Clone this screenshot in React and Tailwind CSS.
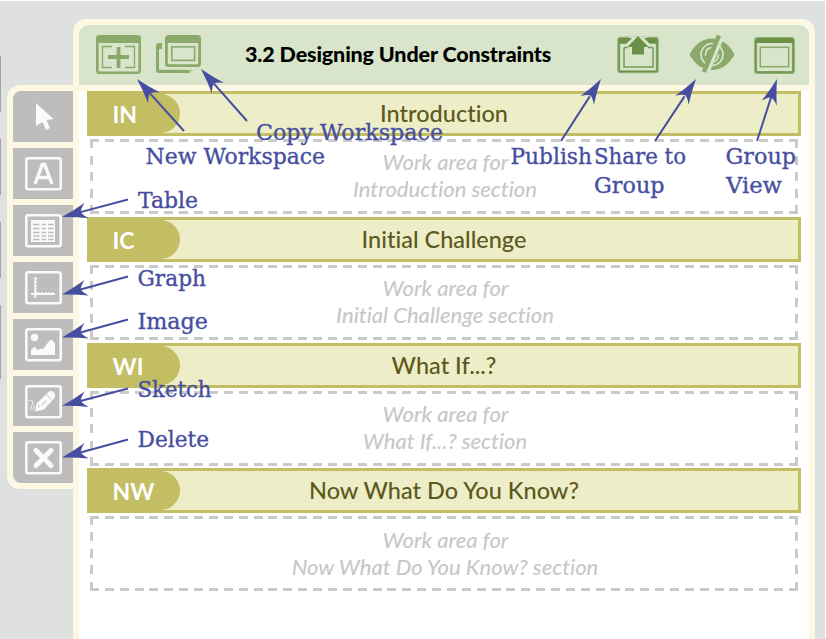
const sections = [
  { code: 'IN', title: 'Introduction', gap: 'mb-[3px]', pad: 'pt-[9px]' },
  { code: 'IC', title: 'Initial Challenge', gap: 'mb-[3px]', pad: 'pt-[9px]' },
  { code: 'WI', title: 'What If...?', gap: 'mb-[2px]', pad: 'pt-[9px]' },
  { code: 'NW', title: 'Now What Do You Know?', gap: '', pad: 'pt-[10px]' },
];

const arrows = [
  [137, 79, 184, 131],
  [201, 69, 247, 121],
  [601, 79, 561, 141],
  [696, 79, 655, 141],
  [777, 79, 757, 141],
  [62, 217, 128, 199.5],
  [62, 294.5, 128, 276.5],
  [62, 337.5, 128, 319.5],
  [62, 405.8, 128, 388.5],
  [62, 457.5, 128, 439.5],
];

const labels = [
  ['Copy Workspace', 256, 140, 187],
  ['New Workspace', 145.5, 164, 179.5],
  ['Publish', 510.5, 164, 81.5],
  ['Share to', 594, 164, 92],
  ['Group', 594, 193, 70.5],
  ['Group', 725.5, 164, 70.5],
  ['View', 726, 193, 56],
  ['Table', 138, 208, 60],
  ['Graph', 137.5, 285.500, 68.500],
  ['Image', 137.5, 328.500, 70.500],
  ['Sketch', 137.5, 396.500, 74],
  ['Delete', 137.5, 447, 71.500],
];

function Frame({ children }) {
  return (
    <svg width="60" height="51" viewBox="0 0 60 51" fill="none" stroke="#fafafa">
      <rect x="13.3" y="10.3" width="34.4" height="31" rx="2" strokeWidth="2.6" />
      {children}
    </svg>
  );
}

const tools = [
  {
    h: 'h-[51px]',
    icon: (
      <svg width="60" height="51" viewBox="0 0 60 51" fill="#fafafa">
        <path d="M23 12 L40.5 28 L33.5 29 L37 37 L33 39 L29.5 31 L23 35Z" />
      </svg>
    ),
  },
  {
    h: 'h-[51px]',
    icon: (
      <Frame>
        <path d="M22 36 L29.3 16.5 H31.7 L39 36 M24.5 29.5 H36.5" strokeWidth="3.4" />
      </Frame>
    ),
  },
  {
    h: 'h-[51px]',
    icon: (
      <Frame>
        <rect x="18" y="15" width="24" height="22" fill="#fafafa" stroke="none" />
        <path d="M20 19.500h6.5m2 0H33m2 0h5.500M20 23.500h6.500m2 0H33m2 0h5.500M20 27.500h6.500m2 0H33m2 0h5.500M20 31h6.500m2 0H33m2 0h5.500M20 34.500h6.500m2 0H33m2 0h5.500" stroke="#bdbdbd" strokeWidth="1.5" />
      </Frame>
    ),
  },
  {
    h: 'h-[51px]',
    icon: (
      <Frame>
        <path d="M22.200 15V36M18 32H42" strokeWidth="1.8" />
        <path d="M23.500 16V31" strokeWidth="1.400" strokeDasharray="1.300 2.200" />
        <path d="M25 30.800H42" strokeWidth="1.400" strokeDasharray="1.300 2.200" />
      </Frame>
    ),
  },
  {
    h: 'h-[51px]',
    icon: (
      <Frame>
        <g fill="#fafafa" stroke="none">
          <circle cx="21.500" cy="18.500" r="3.700" />
          <path d="M18 36V31L21.500 27.500L24.500 31L27.500 29.500L30 30L37 21H39L42 24.500V36Z" />
        </g>
      </Frame>
    ),
  },
  {
    h: 'h-[50px]',
    icon: (
      <Frame>
        <path d="M15.500 25C18 23.500 21 24.500 19.500 28C18 31.500 16.500 34 19.500 33.500C22 33 20.500 29.500 22 29.500" strokeWidth="1" />
        <path d="M22 35.500L23.500 27.500L34.500 17Q36.500 14 40 15.500Q43.500 18.500 41.500 22L31 33.500Z" fill="#fafafa" stroke="none" />
        <path d="M25.500 31.500L26 29M28.500 29.500L33.500 24.500M34 19L38.500 23.500" stroke="#bdbdbd" strokeWidth="1" />
      </Frame>
    ),
  },
  {
    h: 'h-[51px]',
    icon: (
      <Frame>
        <path d="M23 18.500L38 33.500M38 18.500L23 33.500" strokeWidth="5" strokeLinecap="round" />
      </Frame>
    ),
  },
];

function NewWorkspaceIcon() {
  return (
    <svg width="45" height="39" viewBox="0 0 45 39" fill="none" stroke="#8aa96a">
      <rect x="1.300" y="1.300" width="42.400" height="36.400" rx="2" strokeWidth="2.600" />
      <path d="M1 1H44V8H1Z" fill="#8aa96a" stroke="none" />
      <path d="M16 11.500H6.500V32.500H16M29 11.500H38.500V32.500H29" strokeWidth="1.300" />
      <path d="M12 22H33M22.500 12V33" strokeWidth="3.800" />
    </svg>
  );
}

function CopyWorkspaceIcon() {
  return (
    <svg width="45" height="39" viewBox="0 0 45 39" fill="none" stroke="#8aa96a">
      <path d="M6 8V14H3V36H36.500V35H34V38H3Q0 38 0 35V11Q0 8 3 8Z" fill="#8aa96a" stroke="none" />
      <path d="M3 36H33" strokeWidth="2.400" />
      <rect x="10.400" y="1.300" width="33.200" height="29.400" rx="2.500" strokeWidth="2.800" />
      <path d="M10 1H44V8H10Z" fill="#8aa96a" stroke="none" />
      <rect x="15.800" y="11.800" width="22.800" height="13.600" strokeWidth="1.600" />
    </svg>
  );
}

function PublishIcon() {
  return (
    <svg width="42" height="39" viewBox="0 0 42 39" fill="none">
      <rect x="1.700" y="3.300" width="38.600" height="33.400" rx="2" stroke="#8fae72" strokeWidth="3" />
      <rect x="2" y="3.500" width="38" height="33" rx="1.500" stroke="#6b9149" strokeWidth="1.200" />
      <path d="M2 3H40V8.500H2Z" fill="#6b9149" />
      <path d="M7 12.500V32H36V12.500" stroke="#759b56" strokeWidth="1.500" />
      <path d="M12 2H30L34 10H31V15H11V10H8Z" fill="#d8e5cb" />
      <path d="M3 3H15L9.500 8.500H3ZM27 3H39V8.500H32.500Z" fill="#6b9149" />
      <path d="M7 12.500H11M31 12.500H36" stroke="#759b56" strokeWidth="1.300" />
      <path d="M21 1L31.500 12H27V19.500H15V12H10.500Z" fill="#6b9149" />
    </svg>
  );
}

function ShareIcon() {
  return (
    <svg width="46" height="39" viewBox="0 0 46 39" fill="none">
      <path d="M0.500 19.500Q9 3.500 23 3.500Q37 3.500 45.500 19.500Q37 35 23 35Q9 35 0.500 19.500Z" fill="#8aa96a" />
      <circle cx="23" cy="19.500" r="11" stroke="#d8e5cb" strokeWidth="1.600" />
      <path d="M16.500 21Q16 13 23 12.500M29.500 19Q29.500 25 25 27" stroke="#d8e5cb" strokeWidth="1.600" />
      <path d="M32.500 1L17 38" stroke="#d8e5cb" strokeWidth="6" />
      <path d="M30 0.500L15 37" stroke="#8aa96a" strokeWidth="4.500" />
    </svg>
  );
}

function GroupViewIcon() {
  return (
    <svg width="41" height="37" viewBox="0 0 41 37" fill="none">
      <rect x="1.600" y="1.600" width="37.800" height="33.800" rx="2" stroke="#8fae72" strokeWidth="3" />
      <rect x="1.800" y="1.800" width="37.400" height="33.400" rx="1.500" stroke="#6b9149" strokeWidth="1.200" />
      <path d="M2 1.500H39V6H2Z" fill="#6b9149" />
      <rect x="6.300" y="10.300" width="28.400" height="19.400" stroke="#8aa96a" strokeWidth="1.500" />
    </svg>
  );
}

function Section({ code, title, gap, pad }) {
  return (
    <section className={gap}>
      <div className="relative flex h-[45px] items-center justify-center border-[3px] border-[#c3bd63] bg-[#edeec7]">
        <div className="absolute top-0 -left-[3px] flex h-[39px] w-[93px] items-center rounded-r-full bg-[#c3bd63] pt-px pl-[25.5px] text-[23px] font-bold text-white">
          {code}
        </div>
        <h2 className="text-[23.5px] font-medium text-[#5d5820]">{title}</h2>
      </div>
      <div className={`relative mx-[3px] mt-[3px] h-[75px] text-center text-[22px] leading-[27px] font-medium text-[#c8c8c8] italic ${pad}`}>
        <i className="absolute inset-x-0 top-0 h-[3px] bg-[repeating-linear-gradient(90deg,#cacaca_0_9px,transparent_9px_14.872px)]" />
        <i className="absolute inset-x-0 bottom-0 h-[3px] bg-[repeating-linear-gradient(90deg,#cacaca_0_9px,transparent_9px_14.872px)]" />
        <i className="absolute inset-y-0 left-0 w-[3px] bg-[repeating-linear-gradient(180deg,#cacaca_0_9px,transparent_9px_16.5px)]" />
        <i className="absolute inset-y-0 right-0 w-[3px] bg-[repeating-linear-gradient(180deg,#cacaca_0_9px,transparent_9px_16.5px)]" />
        <p className="pl-[3px]">Work area for</p>
        <p className="pl-[2px]">{title} section</p>
      </div>
    </section>
  );
}

function Annotations() {
  return (
    <svg className="absolute inset-0" width="826" height="639" viewBox="0 0 826 639" fill="#464e9f">
      {arrows.map(([x, y, tx, ty], i) => (
        <g key={i}>
          <path d={`M${tx} ${ty}L${x + (tx - x) * 0.28} ${y + (ty - y) * 0.28}`} stroke="#464e9f" strokeWidth="2" />
          <path
            d="M0 0Q14 -3.500 25.500 -8Q20 -3 19.500 0Q20 3 25.500 8Q14 3.500 0 0Z"
            transform={`translate(${x} ${y}) rotate(${(Math.atan2(ty - y, tx - x) * 180) / Math.PI})`}
          />
        </g>
      ))}
      {labels.map(([text, x, y, w], i) => (
        <text
          key={i}
          x={x}
          y={y}
          textLength={w}
          lengthAdjust="spacingAndGlyphs"
          stroke="#464e9f"
          strokeWidth="0.35"
          className="font-['DejaVu_Serif',serif] text-[22.5px]"
        >
          {text}
        </text>
      ))}
    </svg>
  );
}

export default function App() {
  return (
    <div className="relative flex h-[639px] w-[826px] overflow-hidden border-t border-r border-white bg-[#dfe1e1] font-[Lato,sans-serif] [font-variant-ligatures:none]">
      <div className="flex w-[7px] flex-col gap-[27px] pt-[55px]">
        <div className="h-[56px] w-px bg-[#a3a3a3]" />
        <div className="h-[56px] w-px bg-[#a3a3a3]" />
        <div className="h-[56px] w-px bg-[#a3a3a3]" />
        <div className="h-[74px] w-px bg-[#a3a3a3]" />
      </div>
      <aside className="mt-[84px] flex h-[404px] w-[66px] flex-col gap-[6px] rounded-l-[13px] bg-[#fdf8e4] pt-[6px] pl-[6px]">
        {tools.map((t, i) => (
          <button key={i} className={`${t.h} w-[60px] overflow-hidden bg-[#bdbdbd] first:rounded-tl-[8px] last:rounded-bl-[8px]`}>
            {t.icon}
          </button>
        ))}
      </aside>
      <main className="mt-[18px] h-[621px] w-[742px] rounded-t-[13px] border-x-[6px] border-t-[6px] border-[#fdf8e4] bg-white">
        <header className="flex h-[66px] items-start rounded-t-[9px] border-b-[6px] border-[#fdf8e4] bg-[#d8e5cb] pl-[17px]">
          <div className="flex gap-[15px] pt-[10px]">
            <NewWorkspaceIcon />
            <CopyWorkspaceIcon />
          </div>
          <h1 className="ml-[44px] w-[306px] pt-[13px] text-[21.5px] leading-[32px] font-black tracking-[-0.15px] whitespace-nowrap text-black">
            3.2 Designing Under Constraints
          </h1>
          <div className="ml-[66px] flex items-start pt-[10px]">
            <PublishIcon />
            <div className="ml-[30px]"><ShareIcon /></div>
            <div className="mt-[2px] ml-[19px]"><GroupViewIcon /></div>
          </div>
        </header>
        <div className="px-[8px]">
          {sections.map((s) => (
            <Section key={s.code} {...s} />
          ))}
        </div>
      </main>
      <div className="absolute inset-x-0 -top-px h-[639px]">
        <Annotations />
      </div>
    </div>
  );
}
